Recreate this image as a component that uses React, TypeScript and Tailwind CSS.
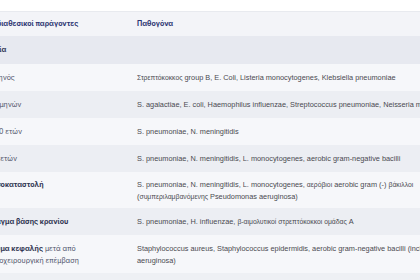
import React from "react";

type Row = {
  left: React.ReactNode;
  right: React.ReactNode;
  shade: "light" | "gray" | "group";
  pad: string;
};

const G = ({ children }: { children: React.ReactNode }) => <span className="text-[6.8px]">{children}</span>;
const B = ({ children }: { children: React.ReactNode }) => <span className="font-bold text-[#2e3350]">{children}</span>;

const rows: Row[] = [
  { left: <B>Ηλικία</B>, right: "", shade: "group", pad: "h-[28px] items-center" },
  {
    left: "< 1 μηνός",
    right: (
      <>
        <G>Στρεπτόκοκκος</G> group B, E. Coli, Listeria monocytogenes, Klebsiella pneumoniae
      </>
    ),
    shade: "light",
    pad: "pt-[8px] pb-[7px]",
  },
  {
    left: "1-23 μηνών",
    right: "S. agalactiae, E. coli, Haemophilus influenzae, Streptococcus pneumoniae, Neisseria meningitidis",
    shade: "gray",
    pad: "pt-[8px] pb-[7px]",
  },
  { left: "2 – 50 ετών", right: "S. pneumoniae, N. meningitidis", shade: "light", pad: "pt-[8px] pb-[7px]" },
  {
    left: "> 50 ετών",
    right: "S. pneumoniae, N. meningitidis, L. monocytogenes, aerobic gram-negative bacilli",
    shade: "gray",
    pad: "pt-[8px] pb-[7px]",
  },
  {
    left: <B>Ανοσοκαταστολή</B>,
    right: (
      <>
        S. pneumoniae, N. meningitidis, L. monocytogenes, <G>αερόβιοι</G> aerobic gram (-) <G>βάκιλλοι</G>
        <br />
        (<G>συμπεριλαμβανόμενης</G> Pseudomonas aeruginosa)
      </>
    ),
    shade: "light",
    pad: "pt-[7px] pb-[5px]",
  },
  {
    left: <B>Κάταγμα βάσης κρανίου</B>,
    right: (
      <>
        S. pneumoniae, H. influenzae, <G>β-αιμολυτικοί στρεπτόκοκκοι ομάδας</G> A
      </>
    ),
    shade: "gray",
    pad: "pt-[8px] pb-[7px]",
  },
  {
    left: (
      <>
        <B>Τραύμα κεφαλής</B> μετά από
        <br />
        νευροχειρουργική επέμβαση
      </>
    ),
    right: (
      <>
        Staphylococcus aureus, Staphylococcus epidermidis, aerobic gram-negative bacilli (including P.
        <br />
        aeruginosa)
      </>
    ),
    shade: "light",
    pad: "pt-[8px] pb-[6px]",
  },
];

const bg = {
  light: "bg-[#f6f7fa]",
  gray: "bg-[#eceef3]",
  group: "bg-[#e7e9f0]",
};

export default function App() {
  return (
    <div className="w-[420px] h-[280px] overflow-hidden bg-white">
      <div className="h-[12px] bg-white border-b border-[#e8eaef]" />
      <div className="ml-[-17px] w-[700px]">
        <div className="grid grid-cols-[142px_1fr] bg-[#f3f4f8] h-[24px] items-center text-[7px] font-bold text-[#2c3572] [font-family:Inter,'Noto_Sans',sans-serif]">
          <div>Προδιαθεσικοί παράγοντες</div>
          <div className="pl-[12px]">Παθογόνα</div>
        </div>
        {rows.map((r, i) => (
          <div key={i} className={`grid grid-cols-[142px_1fr] ${bg[r.shade]} ${r.pad}`}>
            <div className="whitespace-nowrap text-[7px] leading-[12px] text-[#4c5168] [font-family:Inter,'Noto_Sans',sans-serif]">
              {r.left}
            </div>
            <div className="pl-[12px] whitespace-nowrap text-[7.35px] leading-[12px] text-[#4a4a50] [font-family:'Liberation_Sans',Arial,sans-serif]">
              {r.right}
            </div>
          </div>
        ))}
        <div className="h-[12px] bg-[#eef0f4]" />
      </div>
    </div>
  );
}
